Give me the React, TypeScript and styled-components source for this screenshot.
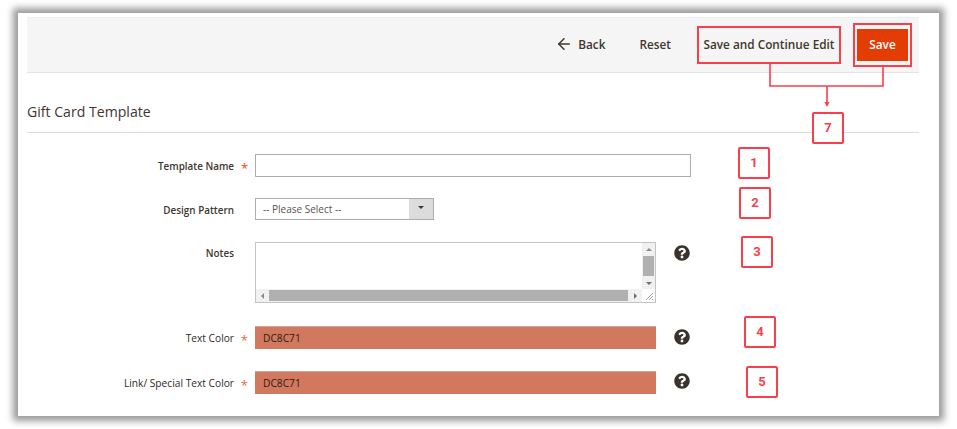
import React from "react";
import styled, { createGlobalStyle } from "styled-components";
import { ArrowLeft } from "lucide-react";
import { FaQuestionCircle } from "react-icons/fa";

const RED = "#fb3e4c";

const Global = createGlobalStyle`
    body {
        margin: 0;
        background: #fff;
        font-family: "Open Sans", "Liberation Sans", sans-serif;
        color: #41362f;
    }
`;

const callouts = [
    { n: 1, x: 720, y: 134 },
    { n: 2, x: 721, y: 174 },
    { n: 3, x: 723, y: 223 },
    { n: 4, x: 726, y: 303 },
    { n: 5, x: 728, y: 353 },
    { n: 7, x: 794, y: 99 },
];

const App = () => {
    return (
        <Page>
            <Global />
            <Frame>
                <Toolbar>
                    <BackLink>
                        <ArrowLeft size={18} strokeWidth={2} />
                        Back
                    </BackLink>
                    <ToolLink>Reset</ToolLink>
                    <ContinueLink>Save and Continue Edit</ContinueLink>
                    <SaveOutline>
                        <SaveButton>Save</SaveButton>
                    </SaveOutline>
                </Toolbar>

                <Title>Gift Card Template</Title>

                <Row $top={21}>
                    <Label $strong $required>Template Name</Label>
                    <TextInput />
                </Row>

                <Row $top={21}>
                    <DesignLabel $strong>Design Pattern</DesignLabel>
                    <SelectBox>
                        <SelectText>-- Please Select --</SelectText>
                        <SelectArrow />
                    </SelectBox>
                </Row>

                <Row $top={22} $start>
                    <NotesLabel $strong>Notes</NotesLabel>
                    <NotesBox>
                        <ScrollY>
                            <ArrowUp />
                            <ThumbY />
                            <ArrowDown />
                        </ScrollY>
                        <ScrollX>
                            <ArrowLeftSmall />
                            <ThumbX />
                            <ArrowRightSmall />
                        </ScrollX>
                        <Grip viewBox="0 0 10 10">
                            <path d="M2 9 L9 2 M5 9 L9 5 M8 9 L9 8" stroke="#8a8a8a" strokeWidth="0.8" />
                        </Grip>
                    </NotesBox>
                    <Help $offset={3}>
                        <FaQuestionCircle size={16} />
                    </Help>
                </Row>

                <Row $top={23}>
                    <Label $required>Text Color</Label>
                    <ColorInput>DC8C71</ColorInput>
                    <Help $offset={-2}>
                        <FaQuestionCircle size={16} />
                    </Help>
                </Row>

                <Row $top={22}>
                    <Label $required>Link/ Special Text Color</Label>
                    <ColorInput>DC8C71</ColorInput>
                    <Help $offset={-4}>
                        <FaQuestionCircle size={16} />
                    </Help>
                </Row>

                <Connector width="921" height="110" viewBox="0 0 921 110">
                    <path d="M752 51 V73 H865 V54 M809 73 V90" fill="none" stroke={RED} strokeWidth="1.6" />
                    <path d="M806.5 89 H811.5 L809 94 Z" fill={RED} />
                </Connector>
                {callouts.map((c) => (
                    <Callout key={c.n} $x={c.x} $y={c.y}>
                        {c.n}
                    </Callout>
                ))}
            </Frame>
        </Page>
    );
};

const Page = styled.div`
    width: 957px;
    height: 429px;
    box-sizing: border-box;
    padding: 13px 18px;
    overflow: hidden;
`;

const Frame = styled.div`
    position: relative;
    width: 921px;
    height: 403px;
    box-sizing: border-box;
    padding: 4px 20px 0 9px;
    background: #fff;
    box-shadow: 0 0 7px 5px #9a9a9a;
`;

const Toolbar = styled.div`
    height: 56px;
    box-sizing: border-box;
    display: flex;
    align-items: center;
    justify-content: flex-end;
    padding-right: 7px;
    background: #f5f5f5;
    border-top: 1px solid #eee;
    border-bottom: 1px solid #e3e3e3;
    font-size: 11.8px;
    font-weight: 600;
`;

const ToolLink = styled.span`
    padding-bottom: 2px;
    color: #41362f;
`;

const BackLink = styled(ToolLink)`
    display: flex;
    align-items: center;
    gap: 5px;
    margin-right: 34px;
`;

const ContinueLink = styled(ToolLink)`
    box-sizing: border-box;
    width: 144px;
    height: 38px;
    margin-left: 26px;
    display: flex;
    align-items: center;
    justify-content: center;
    border: 2px solid ${RED};
`;

const SaveOutline = styled.div`
    box-sizing: border-box;
    width: 59px;
    height: 44px;
    margin-left: 12px;
    display: flex;
    align-items: center;
    justify-content: center;
    border: 2px solid ${RED};
`;

const SaveButton = styled.div`
    width: 51px;
    height: 32px;
    box-sizing: border-box;
    padding-bottom: 2px;
    display: flex;
    align-items: center;
    justify-content: center;
    background: #e33d05;
    color: #fff;
    font-size: 11.8px;
    font-weight: 600;
`;

const Title = styled.div`
    height: 60px;
    box-sizing: border-box;
    padding-top: 27px;
    font-size: 14.1px;
    line-height: 24px;
    color: #41362f;
    border-bottom: 1px solid #dcdcdc;
`;

const Row = styled.div<{ $top: number; $start?: boolean }>`
    display: flex;
    align-items: ${(p) => (p.$start ? "flex-start" : "center")};
    margin-top: ${(p) => p.$top}px;
`;

const Label = styled.div<{ $required?: boolean; $strong?: boolean }>`
    position: relative;
    width: 207px;
    margin-right: 21px;
    text-align: right;
    font-size: ${(p) => (p.$strong ? "9.9px" : "10.2px")};
    font-weight: ${(p) => (p.$strong ? 600 : 400)};
    color: ${(p) => (p.$strong ? "#41362f" : "#33291f")};

    ${(p) =>
        p.$required &&
        `
        &::after {
            content: "*";
            position: absolute;
            right: -14px;
            top: 0;
            font-size: 13px;
            color: #e8683f;
        }
    `}
`;

const DesignLabel = styled(Label)`
    padding-top: 2px;
`;

const NotesLabel = styled(Label)`
    padding-top: 4px;
`;

const TextInput = styled.div`
    box-sizing: border-box;
    width: 436px;
    height: 23px;
    background: #fff;
    border: 1px solid #adadad;
`;

const SelectBox = styled.div`
    box-sizing: border-box;
    width: 179px;
    height: 22px;
    display: flex;
    align-items: center;
    border: 1px solid #adadad;
    font-size: 10px;
    color: #5d5248;
`;

const SelectText = styled.span`
    flex: 1;
    padding-left: 7px;
`;

const SelectArrow = styled.span`
    align-self: stretch;
    width: 24px;
    position: relative;
    background: #dcdcdc;

    &::after {
        content: "";
        position: absolute;
        left: 9px;
        top: 7px;
        border-left: 3px solid transparent;
        border-right: 3px solid transparent;
        border-top: 3px solid #41362f;
    }
`;

const NotesBox = styled.div`
    position: relative;
    box-sizing: border-box;
    width: 401px;
    height: 61px;
    background: #fff;
    border: 1px solid #c4c4c4;
`;

const ScrollY = styled.div`
    position: absolute;
    top: 0;
    right: 0;
    bottom: 13px;
    width: 13px;
    display: flex;
    flex-direction: column;
    align-items: center;
    background: #f1f1f1;
`;

const ThumbY = styled.div`
    width: 11px;
    height: 20px;
    margin-top: 5px;
    background: #b0b0b0;
`;

const ScrollX = styled.div`
    position: absolute;
    left: 0;
    right: 13px;
    bottom: 0;
    height: 13px;
    display: flex;
    align-items: center;
    background: #f1f1f1;
`;

const ThumbX = styled.div`
    flex: 1;
    height: 11px;
    margin: 0 6px 0 5px;
    background: #b0b0b0;
`;

const ArrowUp = styled.span`
    margin-top: 5px;
    border-left: 3px solid transparent;
    border-right: 3px solid transparent;
    border-bottom: 3px solid #8a8a8a;
`;

const ArrowDown = styled.span`
    margin-top: 6px;
    border-left: 3px solid transparent;
    border-right: 3px solid transparent;
    border-top: 3px solid #6e6e6e;
`;

const ArrowLeftSmall = styled.span`
    margin-left: 5px;
    border-top: 3px solid transparent;
    border-bottom: 3px solid transparent;
    border-right: 3px solid #8a8a8a;
`;

const ArrowRightSmall = styled.span`
    margin-right: 5px;
    border-top: 3px solid transparent;
    border-bottom: 3px solid transparent;
    border-left: 3px solid #6e6e6e;
`;

const Grip = styled.svg`
    position: absolute;
    right: 1px;
    bottom: 1px;
    width: 10px;
    height: 10px;
`;

const ColorInput = styled.div`
    box-sizing: border-box;
    width: 401px;
    height: 23px;
    line-height: 23px;
    padding-left: 8px;
    background: #d2785e;
    border-top: 1px solid #c9a99f;
    font-size: 10.2px;
    color: #2b1c16;
`;

const Help = styled.div<{ $offset?: number }>`
    display: flex;
    margin-left: 18px;
    margin-top: ${(p) => p.$offset ?? 0}px;
    color: #3a322c;
`;

const Connector = styled.svg`
    position: absolute;
    left: 0;
    top: 0;
    pointer-events: none;
`;

const Callout = styled.div<{ $x: number; $y: number }>`
    position: absolute;
    left: ${(p) => p.$x}px;
    top: ${(p) => p.$y}px;
    box-sizing: border-box;
    width: 32px;
    height: 32px;
    padding-bottom: 2px;
    display: flex;
    align-items: center;
    justify-content: center;
    background: #fff;
    border: 2px solid ${RED};
    border-radius: 2px;
    color: ${RED};
    font-family: Roboto, "Liberation Sans", sans-serif;
    font-size: 13px;
    font-weight: 700;
`;

export default App;
